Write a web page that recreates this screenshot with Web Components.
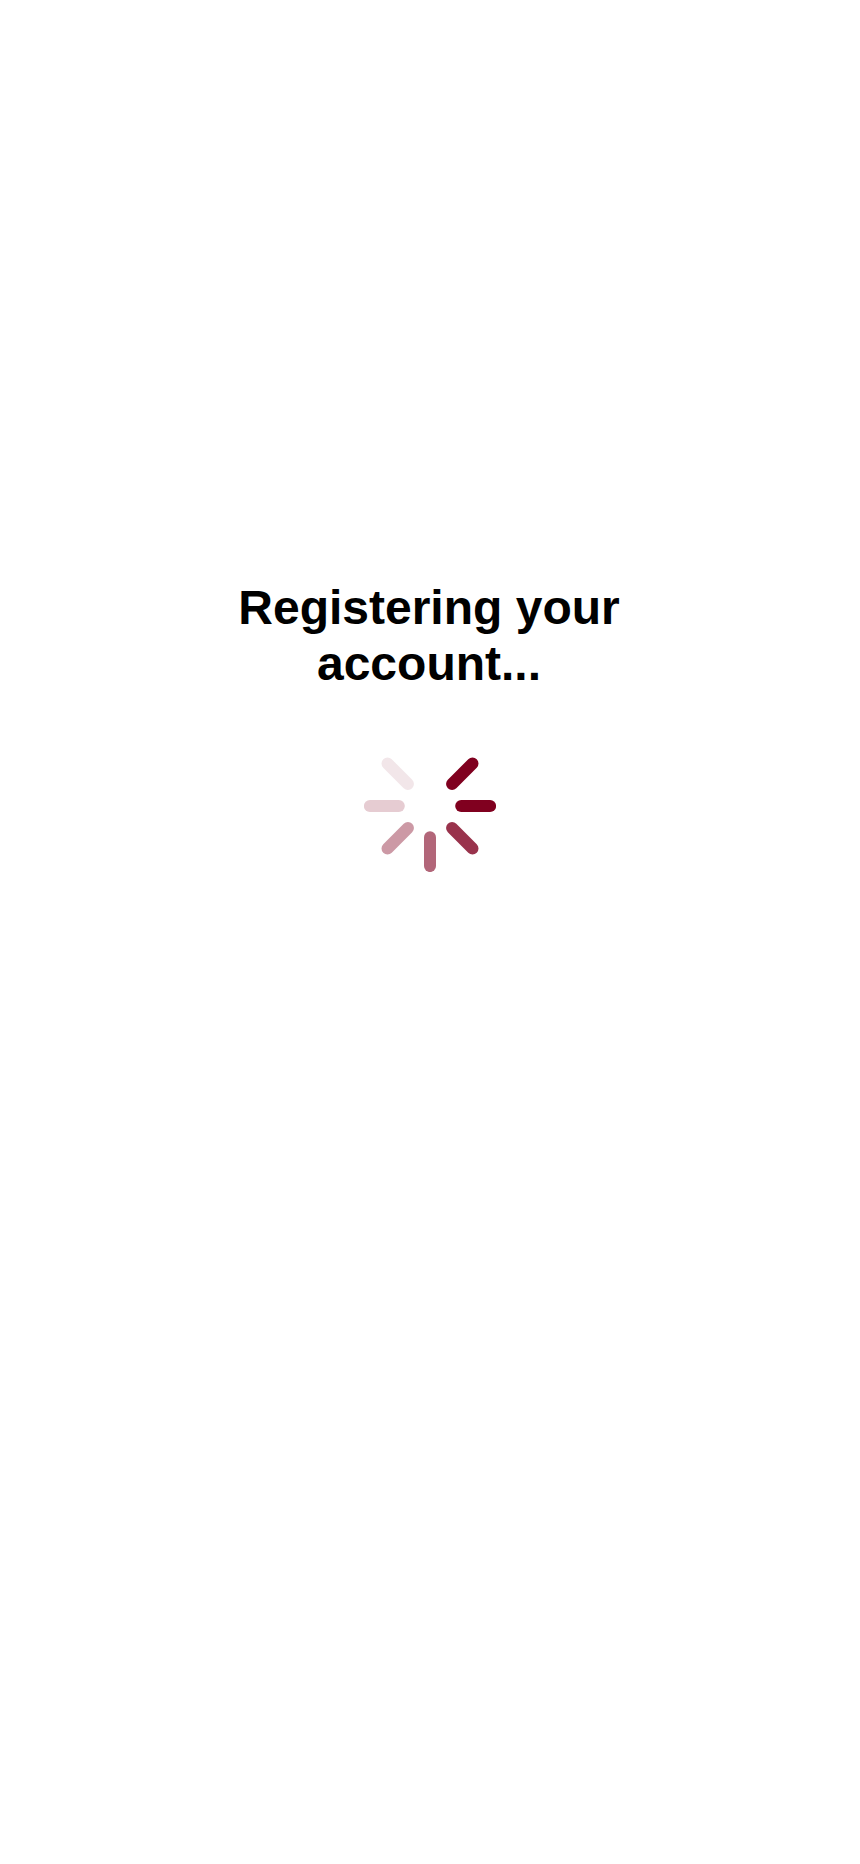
<!DOCTYPE html>
<html lang="en">
<head>
<meta charset="utf-8">
<title>Registering</title>
<style>
  html, body { margin: 0; background: #fff; }
</style>
</head>
<body>
<loading-screen>
  <status-title>Registering your account...</status-title>
  <activity-spinner></activity-spinner>
</loading-screen>
<script>
  class LoadingScreen extends HTMLElement {
    constructor() {
      super();
      this.attachShadow({ mode: 'open' }).innerHTML = `
        <style>
          :host { display: flex; flex-direction: column; align-items: center; box-sizing: border-box;
            width: 100%; height: 1864px; padding-top: 580px; gap: 48px; background: #fff;
            font-family: "Liberation Sans", Arial, sans-serif; }
        </style>
        <slot></slot>`;
    }
  }
  class StatusTitle extends HTMLElement {
    constructor() {
      super();
      this.attachShadow({ mode: 'open' }).innerHTML = `
        <style>
          :host { display: block; width: 480px; padding-right: 2px; }
          h1 { margin: 0; font-size: 48px; line-height: 56px; font-weight: 700; color: #000; text-align: center; }
        </style>
        <h1><slot></slot></h1>`;
    }
  }
  class ActivitySpinner extends HTMLElement {
    constructor() {
      super();
      // Bars at 45 degree steps, clockwise from the upper right; the top bar is faded out.
      const shades = ['#80001f', '#80001f', '#99334c', '#b26679', '#cc99a5', '#e6ccd2', '#f2e6e9'];
      const bars = shades.map((c, i) =>
        `<line x1="0" y1="-31.2" x2="0" y2="-60.1" stroke="${c}" transform="rotate(${45 * (i + 1)})"/>`).join('');
      this.attachShadow({ mode: 'open' }).innerHTML = `
        <style>
          :host { display: block; width: 132px; height: 132px; }
          svg { display: block; }
        </style>
        <svg width="132" height="132" viewBox="-66 -66 132 132" stroke-width="12" stroke-linecap="round" role="img" aria-label="Loading">${bars}</svg>`;
    }
  }
  customElements.define('loading-screen', LoadingScreen);
  customElements.define('status-title', StatusTitle);
  customElements.define('activity-spinner', ActivitySpinner);
</script>
</body>
</html>
